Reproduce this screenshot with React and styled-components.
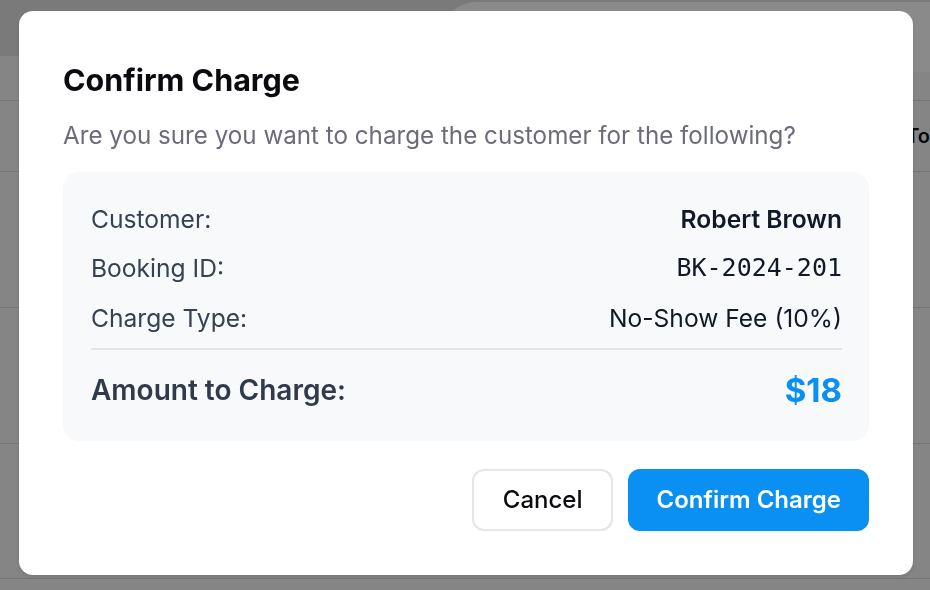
import React from 'react';
import styled, { createGlobalStyle } from 'styled-components';

const GlobalStyle = createGlobalStyle`
	html, body {
		margin: 0;
		padding: 0;
		height: 100%;
		overflow: hidden;
	}
	body {
		font-family: Inter, 'Noto Sans', sans-serif;
		background: #f2f2f2;
	}
`;

const Page = styled.div`
	width: 930px;
	height: 590px;
	display: flex;
	flex-direction: column;
	background: #f2f2f2;
`;

const Header = styled.header`
	height: 56px;
	flex-shrink: 0;
	display: flex;
	justify-content: flex-end;
	align-items: flex-start;
	background: #dedede;
	padding-top: 2px;
	box-sizing: border-box;
`;

const Search = styled.div`
	width: 490px;
	height: 70px;
	border-radius: 36px 0 0 0;
	background: #fbfbfb;
`;

const Row = styled.div`
	height: ${(p) => p.h}px;
	flex-shrink: 0;
	border-bottom: 1px solid #d6d6d6;
	display: flex;
	justify-content: flex-end;
	align-items: center;
	font-size: 20px;
	font-weight: 600;
	color: #111;
	overflow: hidden;
`;

const Cell = styled.span`
	margin-right: 0;
`;

const Overlay = styled.div`
	position: fixed;
	inset: 0;
	background: rgba(0, 0, 0, 0.45);
	display: flex;
	align-items: center;
	justify-content: center;
`;

const Modal = styled.div`
	width: 894px;
	box-sizing: border-box;
	margin: -5px 0 0 2px;
	padding: 52px 44px 44px;
	background: #fff;
	border-radius: 14px;
	box-shadow: 0 2px 4px rgba(0, 0, 0, 0.12);
`;

const Title = styled.h2`
	margin: 0;
	font-size: 30.5px;
	line-height: 34px;
	font-weight: 700;
	color: #0b0b0f;
`;

const Subtitle = styled.p`
	margin: 23px 0 20px;
	font-size: 24.2px;
	line-height: 32px;
	color: #6b6b7b;
`;

const Summary = styled.div`
	background: #f8f9fb;
	border-radius: 16px;
	padding: 32px 27px 33px 28px;
	display: flex;
	flex-direction: column;
	gap: 19.5px;
`;

const Line = styled.div`
	display: flex;
	justify-content: space-between;
	align-items: center;
	line-height: 30px;
	font-size: 24.6px;
	color: #364152;
`;

const Value = styled.span`
	color: #111827;
	font-weight: ${(p) => (p.$bold ? 600 : 400)};
	font-size: ${(p) => (p.$mono ? '25px' : 'inherit')};
	font-family: ${(p) =>
		p.$mono ? "'DejaVu Sans Mono', 'Liberation Mono', monospace" : 'inherit'};
`;

const Divider = styled.hr`
	margin: -4px 0 2px;
	border: none;
	border-top: 2px solid #e3e5e8;
`;

const Total = styled.div`
	display: flex;
	justify-content: space-between;
	align-items: center;
	line-height: 36px;
	font-size: 28px;
	font-weight: 600;
	color: #2f3a4b;
`;

const Amount = styled.span`
	font-size: 33px;
	font-weight: 700;
	color: #0a8ff2;
`;

const Actions = styled.div`
	margin-top: 28px;
	display: flex;
	justify-content: flex-end;
	gap: 15px;
`;

const Button = styled.button`
	height: 62px;
	padding: 0 ${(p) => (p.$primary ? 26 : 29)}px;
	border-radius: 12px;
	font-family: inherit;
	font-size: 24px;
	font-weight: ${(p) => (p.$primary ? 600 : 500)};
	cursor: pointer;
	border: 2px solid ${(p) => (p.$primary ? '#0a8ff2' : '#e6e6e6')};
	background: ${(p) => (p.$primary ? '#0a8ff2' : '#fff')};
	color: ${(p) => (p.$primary ? '#fff' : '#0b0b0f')};
`;

const details = [
	{ label: 'Customer:', value: 'Robert Brown', bold: true },
	{ label: 'Booking ID:', value: 'BK-2024-201', mono: true },
	{ label: 'Charge Type:', value: 'No-Show Fee (10%)' },
];

const App = () => {
	return (
		<>
			<GlobalStyle />
			<Page>
				<Header>
					<Search />
				</Header>
				<Row h={44} />
				<Row h={70}>
					<Cell>To</Cell>
				</Row>
				<Row h={135} />
				<Row h={135} />
				<Row h={134} />
			</Page>
			<Overlay>
				<Modal>
					<Title>Confirm Charge</Title>
					<Subtitle>
						Are you sure you want to charge the customer for the following?
					</Subtitle>
					<Summary>
						{details.map((d) => (
							<Line key={d.label}>
								<span>{d.label}</span>
								<Value $bold={d.bold} $mono={d.mono}>
									{d.value}
								</Value>
							</Line>
						))}
						<Divider />
						<Total>
							<span>Amount to Charge:</span>
							<Amount>$18</Amount>
						</Total>
					</Summary>
					<Actions>
						<Button>Cancel</Button>
						<Button $primary>Confirm Charge</Button>
					</Actions>
				</Modal>
			</Overlay>
		</>
	);
};

export default App;
